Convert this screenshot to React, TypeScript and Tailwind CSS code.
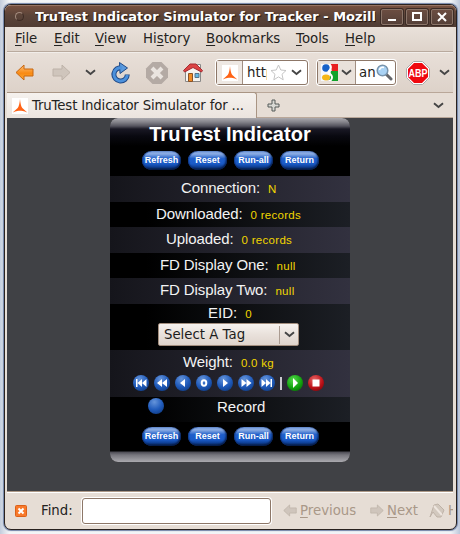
import React from 'react';

const ui = "font-['DejaVu_Sans',sans-serif]";
const arial = "font-['Liberation_Sans',Arial,sans-serif]";

function Chevron({ className = '' }: { className?: string }) {
  return (
    <svg className={`h-[7px] w-[11px] shrink-0 ${className}`} viewBox="0 0 11 7">
      <path d="M1 1.2 5.5 5 10 1.2" fill="none" stroke="#454545" strokeWidth="1.9" />
    </svg>
  );
}

function Site() {
  return (
    <svg className="h-4 w-4 shrink-0 bg-white" viewBox="0 0 16 16">
      <path d="M8 1C8.300 5 9 8.200 10.300 10L15.300 14.500C11.500 13 9.500 12.800 8 12.800S4.500 13 .7 14.500L5.700 10C7 8.200 7.700 5 8 1Z" fill="#ff6315" />
    </svg>
  );
}

function WinButton({ children }: { children: React.ReactNode }) {
  return (
    <div className="flex h-4 w-[22px] items-center justify-center rounded-[2px] border border-[#8b7569] bg-[linear-gradient(#6b4d41,#554038)] shadow-[0_0_0_1px_#3b2b25]">
      <svg width="12" height="12" viewBox="0 0 12 12" fill="none" stroke="white" strokeWidth="2">{children}</svg>
    </div>
  );
}

function MenuItem({ before = '', k, after, className }: { before?: string; k: string; after: string; className: string }) {
  return (
    <span className={`shrink-0 whitespace-nowrap ${className}`}>
      {before}<span className="underline decoration-1 underline-offset-2">{k}</span>{after}
    </span>
  );
}

function PillRow({ className = '' }: { className?: string }) {
  return (
    <div className={`flex gap-[7px] pl-8 ${className}`}>
      {['Refresh', 'Reset', 'Run-all', 'Return'].map((t) => (
        <div key={t} className={`flex h-[19px] w-[39px] items-center justify-center rounded-full bg-[linear-gradient(#7298d8_0%,#8cade4_15%,#5585d5_28%,#1f5fcb_40%,#1a5ac6_68%,#0f3f94_84%,#051838_100%)] text-[9px] leading-none font-bold text-white shadow-[inset_-1px_-1px_2px_#061c4a,inset_1px_0_1px_#123f92] ${arial}`}>
          {t}
        </div>
      ))}
    </div>
  );
}

const shades = {
  a: 'bg-[linear-gradient(90deg,#15151b,#32313f)]',
  b: 'bg-[linear-gradient(90deg,#000_15%,#1c1f25)]',
};

function Row({ label, value, shade, height, pad }: { label: string; value: string; shade: string; height: string; pad: string }) {
  return (
    <div className={`flex items-baseline pt-[3px] text-[15px] leading-[18px] whitespace-pre ${shade} ${height} ${pad}`}>
      <span className="tracking-[-0.100px]">{label}</span>
      <span className="ml-2 text-[11.500px] tracking-[0.300px] text-[#f2d600]">{value}</span>
    </div>
  );
}

function Orb({ kind }: { kind: string }) {
  const color = kind === 'play'
    ? 'bg-[radial-gradient(circle_at_40%_30%,#55d94c,#11a20d_55%,#045603)]'
    : kind === 'stop'
      ? 'bg-[radial-gradient(circle_at_40%_30%,#e76767,#bd1118_55%,#600004)]'
      : 'bg-[radial-gradient(circle_at_40%_25%,#6594da,#205bbb_50%,#09306f)]';
  const shapes: Record<string, React.ReactNode> = {
    first: <path d="M3 4h1.500v8H3zM9 4v8L4.500 8zM13.500 4v8L9 8z" />,
    rewind: <path d="M8 4v8L3 8zM13 4v8L8 8z" />,
    back: <path d="M10 4v8L5 8z" />,
    zero: <ellipse cx="8" cy="8" rx="2.300" ry="2.700" fill="none" stroke="white" strokeWidth="2" />,
    next: <path d="M6 4v8l5-4z" />,
    forward: <path d="M3.500 4v8l5-4zM8.500 4v8l5-4z" />,
    last: <path d="M2.500 4v8L7 8zM7 4v8l4.500-4zM11.500 4H13v8h-1.500z" />,
    play: <path d="M6 3v10l5-5z" />,
    stop: <path d="M4.500 4.500h7v7h-7z" />,
    none: null,
  };
  return (
    <div className={`h-4 w-4 shrink-0 rounded-full ${color}`}>
      <svg className="block" width="16" height="16" viewBox="0 0 16 16" fill="white">{shapes[kind]}</svg>
    </div>
  );
}

function Arrow({ left = false, active = false, small = false }: { left?: boolean; active?: boolean; small?: boolean }) {
  return (
    <svg className={`shrink-0 ${small ? 'h-[13px] w-[14px]' : 'h-[17px] w-[19px]'} ${left ? '-scale-x-100' : ''}`} viewBox="0 0 19 17">
      <defs>
        <linearGradient id="orangeArrow" x2="0" y2="1"><stop stopColor="#ffc078" /><stop offset=".55" stopColor="#f98a13" /><stop offset="1" stopColor="#ffac38" /></linearGradient>
      </defs>
      <path d="M1 5h9V1l8 7.500-8 7.500v-4H1Z" fill={active ? 'url(#orangeArrow)' : '#cfc5bc'} stroke={active ? '#c76611' : '#bdb2a8'} strokeLinejoin="round" />
    </svg>
  );
}

function TitleBar() {
  return (
    <div className="flex h-[22px] shrink-0 items-center rounded-t-[5px] border-t border-[#987462] bg-[linear-gradient(#76503f,#5b4439_45%,#503c33)]">
      <div className="ml-[10px] h-[9px] w-[9px] shrink-0 rounded-full border border-[#a28b7e] border-r-[#3d2b24] border-b-[#3d2b24]" />
      <div className="ml-[11px] w-[341px] shrink-0 overflow-hidden text-[13px] leading-5 font-bold whitespace-nowrap text-white [text-shadow:1px_1px_1px_#1d120d]">
        <span className="tracking-[0.010px]">TruTest Indicator Simulator for Tracker - Mozilla</span>
      </div>
      <div className="ml-[5px] flex gap-[3px]">
        <WinButton><path d="M2 9h8" /></WinButton>
        <WinButton><path d="M2 2h8v7H2z" /></WinButton>
        <WinButton><path d="m2 2 8 8M10 2l-8 8" /></WinButton>
      </div>
    </div>
  );
}

function Toolbar() {
  return (
    <div className="flex h-10 shrink-0 items-center border-t border-white/60 bg-[linear-gradient(#e8dfd8,#ddd2c9)] pl-2">
      <Arrow left active />
      <div className="ml-[18px]"><Arrow /></div>
      <Chevron className="ml-[14px]" />
      <svg className="ml-[15px] h-[22px] w-5 shrink-0" viewBox="0 0 20 22">
        <path d="M11 5.800A6.700 6.700 0 1 0 16.300 12.500" fill="none" stroke="#214a87" strokeWidth="5" />
        <path d="M8.500.5 16.500 6 9 11.500Z" fill="#5b9add" stroke="#214a87" strokeLinejoin="round" />
        <path d="M11 5.800A6.700 6.700 0 1 0 16.300 13" fill="none" stroke="#4c91dc" strokeWidth="3" />
      </svg>
      <svg className="ml-[14px] h-6 w-6 shrink-0" viewBox="0 0 24 24">
        <path d="M7.500 1h9L23 7.500v9L16.500 23h-9L1 16.500v-9Z" fill="#b4aaa4" />
        <path d="m7 7 10 10M17 7 7 17" stroke="#eae4df" strokeWidth="4" />
      </svg>
      <svg className="ml-[13px] h-[22px] w-[22px] shrink-0" viewBox="0 0 22 22">
        <path d="M15.500 2.500h3v6h-3z" fill="#f5f3ef" stroke="#888" />
        <path d="M3.500 9.500 11 4l7.500 5.500v10h-15z" fill="#f5f3ef" stroke="#888" />
        <path d="M1.500 8.500 8 2h6l6.500 6.500L19.500 10 11 5.500 2.500 10Z" fill="#dc4444" stroke="#a62c32" strokeLinejoin="round" />
        <path d="M6.500 11.500h4v8h-4z" fill="#f08a24" stroke="#8a5226" /><path d="M13 11.500h4v4h-4z" fill="#64b9e5" stroke="#56748b" />
      </svg>
      <div className="ml-3 flex h-[25px] w-[92px] shrink-0 items-center rounded-[3px] border border-[#8d7768] bg-white shadow-[0_0_0_1px_white]">
        <div className="flex h-full w-[26px] items-center justify-center border-r border-[#a18f82] bg-[#eee8e3]"><Site /></div>
        <span className="ml-1 w-5 overflow-hidden text-[13.300px]">http</span>
        <svg className="ml-[3px] h-[17px] w-[17px] shrink-0" viewBox="0 0 17 17"><path d="m8.500 1 2.300 5 5.200.500-4 3.800 1.200 5.500-4.700-2.900-4.700 2.900L5 10.300 1 6.500 6.200 6Z" fill="white" stroke="#c5c5c5" /></svg>
        <Chevron className="ml-1" />
      </div>
      <div className="ml-[9px] flex h-[25px] w-[79px] shrink-0 items-center rounded-[3px] border border-[#8d7768] bg-white shadow-[0_0_0_1px_white]">
        <div className="flex h-full w-[38px] shrink-0 items-center border-r border-[#a18f82] bg-[#e9e1da] pl-[3px]">
          <svg className="shrink-0" width="17" height="17" viewBox="0 0 17 17">
            <path d="M0 0h7l3 8-4 9H0Z" fill="#f5f8ff" /><path d="M9 0h8v7h-6Z" fill="#e82020" /><path d="M10 7h7v10H8Z" fill="#11a22c" />
            <circle cx="5" cy="4" r="3.800" fill="#1762c9" /><ellipse cx="5" cy="13.500" rx="4" ry="3" fill="#f5b719" /><path d="M8 0c3 2 2 5 0 7s3 3 3 6-2 4-3 4" fill="none" stroke="white" strokeWidth="2" />
          </svg>
          <Chevron className="ml-[3px]" />
        </div>
        <span className="ml-[3px] w-[17px] text-[13.300px]">an</span>
        <svg className="h-[17px] w-[17px] shrink-0" viewBox="0 0 17 17"><path d="m10 10 5 5" stroke="#66676b" strokeWidth="3" strokeLinecap="round" /><circle cx="6.500" cy="6.500" r="5.300" fill="#a9d2f4" stroke="#7894ad" strokeWidth="1.500" /><path d="M3.500 6C4 3.500 6 3 8 3.500" fill="none" stroke="white" strokeWidth="1.500" /></svg>
      </div>
      <svg className="ml-[10px] h-6 w-6 shrink-0" viewBox="0 0 24 24">
        <path d="M7.500.5h9l7 7v9l-7 7h-9l-7-7v-9Z" fill="white" stroke="#aaa" />
        <path d="M8 2h8l6 6v8l-6 6H8l-6-6V8Z" fill="#ef0910" />
        <text x="12" y="16.300" textAnchor="middle" textLength="19" lengthAdjust="spacingAndGlyphs" fill="white" fontSize="11.500" fontWeight="bold" fontFamily="Liberation Sans, sans-serif">ABP</text>
      </svg>
      <Chevron className="ml-[9px]" />
    </div>
  );
}

function Tabs() {
  return (
    <div className="flex h-[26px] shrink-0 items-center border-t border-b border-[#b9a799] bg-[#e6ddd5]">
      <div className="flex h-[26px] w-[250px] shrink-0 items-center rounded-tr-[3px] border-t border-r border-[#a99584] bg-[linear-gradient(#f5f1ee,#ebe4de)] pl-[5px]">
        <Site /><span className="ml-1 text-[13.300px] tracking-[-0.150px] whitespace-nowrap">TruTest Indicator Simulator for ...</span>
      </div>
      <svg className="ml-[10px] h-[13px] w-[13px]" viewBox="0 0 13 13"><path d="M5 1h3v4h4v3H8v4H5V8H1V5h4Z" fill="#d9d9d4" stroke="#555a58" /></svg>
      <Chevron className="mr-[9px] ml-auto" />
    </div>
  );
}

function Panel() {
  return (
    <div className={`ml-[103px] h-[344px] w-60 shrink-0 overflow-hidden rounded-[8px] bg-black text-[#f3f3f3] ${arial}`}>
      <div className="h-[58px] bg-[linear-gradient(#aaa9ae_0,#85848b_4px,#55545e_8px,#191824_11px,#090910_18px,#000_28px)] pt-1">
        <h1 className="h-[29px] text-center text-[20px] leading-6 font-bold tracking-[0.050px] text-white">TruTest Indicator</h1>
        <PillRow />
      </div>
      <Row label="Connection:" value="N" shade={shades.a} height="h-[26px]" pad="pl-[71px]" />
      <Row label="Downloaded:" value="0 records" shade={shades.b} height="h-[25px]" pad="pl-[46px]" />
      <Row label="Uploaded:" value="0 records" shade={shades.a} height="h-[26px]" pad="pl-[56px]" />
      <Row label="FD Display One:" value="null" shade={shades.b} height="h-[25px]" pad="pl-[50px]" />
      <Row label="FD Display Two:" value="null" shade={shades.a} height="h-[26px]" pad="pl-[50px]" />
      <div className={`flex h-[46px] flex-col ${shades.b}`}>
        <div className="flex h-[19px] items-baseline pl-[98px] text-[15px] leading-[18px]">
          <span>EID:</span><span className="ml-2 text-[11.500px] text-[#f2d600]">0</span>
        </div>
        <div className={`ml-12 flex h-[23px] w-[141px] shrink-0 items-center rounded-[2px] border border-[#a38e7e] bg-[linear-gradient(#f6f2ef,#e9e1db_50%,#dfd4cc)] text-[13.300px] text-[#1c1c1c] ${ui}`}>
          <span className="ml-[5px] w-[115px] whitespace-nowrap">Select A Tag</span>
          <span className="mr-1 h-[18px] border-l border-[#aa9b91]" />
          <Chevron />
        </div>
      </div>
      <div className={`h-[47px] ${shades.a}`}>
        <Row label="Weight:" value="0.0 kg" shade="" height="h-[25px]" pad="pl-[73px]" />
        <div className="flex items-center gap-[5px] pl-[23px]">
          {['first', 'rewind', 'back', 'zero', 'next', 'forward', 'last'].map((k) => <Orb key={k} kind={k} />)}
          <span className="h-[13px] w-[2px] bg-[#c9c9ce]" />
          <Orb kind="play" /><Orb kind="stop" />
        </div>
      </div>
      <div className={`flex h-[25px] items-start pt-px pl-[38px] text-[15px] leading-[17px] ${shades.b}`}>
        <Orb kind="none" /><span className="ml-[53px]">Record</span>
      </div>
      <div className="flex h-[40px] flex-col bg-[linear-gradient(#000_0,#000_29px,#4c4b54_30px,#77767d_33px,#aaa9ae_40px)] pt-[5px]"><PillRow /></div>
    </div>
  );
}

function FindBar() {
  return (
    <div className="flex h-9 shrink-0 items-center overflow-hidden border-t border-white bg-[#e6ddd5] pl-2 text-[13.300px] shadow-[0_-1px_0_#ad9987]">
      <svg className="h-3 w-3 shrink-0" viewBox="0 0 12 12"><rect x=".5" y=".5" width="11" height="11" rx="1" fill="#f8792b" stroke="#db6019" /><path d="m3.500 3.500 5 5m0-5-5 5" stroke="white" strokeWidth="2" /></svg>
      <span className="ml-[14px] w-[41px] shrink-0">Find:</span>
      <div className="h-[26px] w-[189px] shrink-0 rounded-[3px] border border-[#8d7768] bg-white shadow-[0_0_0_1px_white]" />
      <div className="ml-3 flex w-[87px] shrink-0 items-center gap-[3px] text-[#a99888]"><Arrow left small /><MenuItem k="P" after="revious" className="" /></div>
      <div className="flex w-[59px] shrink-0 items-center gap-[3px] text-[#a99888]"><Arrow small /><MenuItem k="N" after="ext" className="" /></div>
      <svg className="h-4 w-4 shrink-0" viewBox="0 0 16 16"><path d="m1 14 4-12 4-1 6 6-3 7H8L4 9Z" fill="#d2c8be" stroke="#beb2a7" /><path d="m5 3 8 9" stroke="#eee6df" strokeWidth="2" /></svg>
      <span className="ml-[3px] shrink-0 text-[#a99888]">H</span>
    </div>
  );
}

export default function App() {
  return (
    <div className={`h-[534px] w-[460px] overflow-hidden bg-[linear-gradient(90deg,#c3cddd,#f3f5f7_2%,#f0f3f7_98%,#bcc7da)] pt-1 pl-1 text-[#242321] ${ui}`}>
      <div className="flex h-[526px] w-[453px] flex-col overflow-hidden rounded-[7px] border border-[#29221f] bg-[#e6ddd5] shadow-[0_0_1px_1px_#7283a7]">
        <TitleBar />
        <div className="mr-[3px] ml-[2px] flex min-h-0 flex-1 flex-col">
          <div className="flex h-[25px] shrink-0 items-center border-b border-[#b9aa9e] bg-[linear-gradient(#e9e1da,#ded3ca)] pl-2 text-[13.300px]">
            <MenuItem k="F" after="ile" className="w-[39px]" />
            <MenuItem k="E" after="dit" className="w-[41px]" />
            <MenuItem k="V" after="iew" className="w-12" />
            <MenuItem before="Hi" k="s" after="tory" className="w-[63px]" />
            <MenuItem k="B" after="ookmarks" className="w-[90px]" />
            <MenuItem k="T" after="ools" className="w-[49px]" />
            <MenuItem k="H" after="elp" className="" />
          </div>
          <Toolbar />
          <Tabs />
          <div className="h-[374px] shrink-0 bg-[#404145]"><Panel /></div>
          <FindBar />
        </div>
      </div>
    </div>
  );
}
